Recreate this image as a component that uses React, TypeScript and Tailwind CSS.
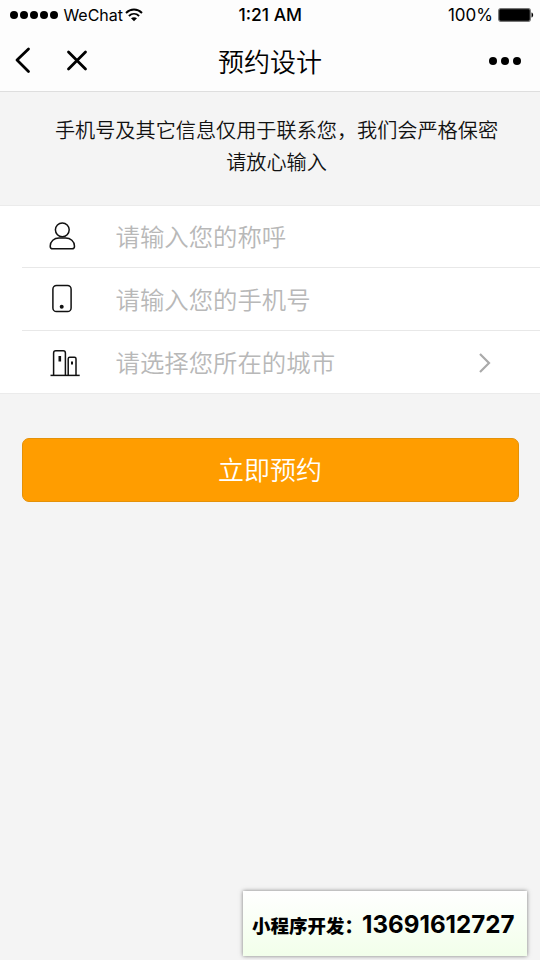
import type { ReactNode } from "react";

interface FieldRowProps {
  icon: ReactNode;
  placeholder: string;
  arrow?: boolean;
  last?: boolean;
}

const UserIcon = () => (
  <svg width="32" height="32" viewBox="0 0 32 32" fill="none" stroke="#111" strokeWidth="1.5">
    <circle cx="14.3" cy="8.8" r="6.9" />
    <path d="M11 17h6.600c4.800 0 8.900 3.300 8.900 8.200 0 1.700-1 2.600-2.600 2.600H4.800c-1.600 0-2.600-.9-2.600-2.600 0-4.900 4-8.200 8.800-8.200z" />
  </svg>
);

const PhoneIcon = () => (
  <svg width="32" height="32" viewBox="0 0 32 32" fill="none" stroke="#111" strokeWidth="1.5">
    <rect x="4.900" y="2.600" width="18.200" height="26" rx="3.600" />
    <circle cx="13.700" cy="23.700" r="2" fill="#111" stroke="none" />
  </svg>
);

const CityIcon = () => (
  <svg width="32" height="32" viewBox="0 0 32 32" fill="none" stroke="#111" strokeWidth="1.5">
    <path d="M2.500 29.400h29.200" />
    <path d="M5.600 29V7c0-1.400.8-2.200 2.200-2.200h7.400c1.400 0 2.200.8 2.200 2.200v22" />
    <path d="M20.200 29V12.800c0-1 .5-1.500 1.500-1.500h4.800c1 0 1.500.5 1.500 1.500V29" />
    <path d="M11.800 10v5.500" strokeWidth="2.600" />
    <path d="M24 15.500v3" strokeWidth="2" />
  </svg>
);

const StatusBar = () => (
  <div className="flex h-[30px] items-center justify-between pl-[9.500px] pr-[6px] text-[17px] leading-none">
    <div className="flex w-[200px] items-center">
      <div className="flex gap-[1.600px]">
        {[0, 1, 2, 3, 4].map((i) => (
          <span key={i} className="h-[8.500px] w-[8.500px] rounded-full bg-black" />
        ))}
      </div>
      <span className="ml-[5px] text-[16px]">WeChat</span>
      <svg className="ml-[2px]" width="18" height="14" viewBox="0 0 18 14" fill="none" stroke="#000" strokeWidth="1.900">
        <path d="M1 5C5.600.4 12.400.4 17 5" />
        <path d="M3.900 8c3-2.900 7.200-2.900 10.200 0" />
        <path d="M6 10.300c1.800-1.500 4.200-1.500 6 0L9 13.300z" fill="#000" stroke="none" />
      </svg>
    </div>
    <span className="-ml-[3px] text-[17.500px] font-[450]">1:21 AM</span>
    <div className="flex w-[200px] items-center justify-end">
      <span>100%</span>
      <svg className="ml-[5px]" width="36" height="14" viewBox="0 0 36 14">
        <rect x=".7" y=".7" width="31.600" height="12.600" rx="2" fill="#000" stroke="#777" strokeWidth="1.200" />
        <path d="M33.500 4.500c2.200.5 2.200 4.500 0 5z" fill="#000" />
      </svg>
    </div>
  </div>
);

const NavBar = () => (
  <div className="flex h-[61px] items-center justify-between pl-[14px] pr-[19px]">
    <div className="flex w-[120px] items-center">
      <svg width="18" height="28" viewBox="0 0 18 28" fill="none" stroke="#000" strokeWidth="2.800" strokeLinecap="round" strokeLinejoin="round">
        <path d="M14.500 2L3 13l11.500 11.500" />
      </svg>
      <svg className="ml-[34px]" width="22" height="22" viewBox="0 0 22 22" fill="none" stroke="#000" strokeWidth="2.800" strokeLinecap="round">
        <path d="M2.500 2l17 17M19.500 2l-17 17" />
      </svg>
    </div>
    <h1 className="pt-[5px] text-[26px] font-[350] leading-none">预约设计</h1>
    <div className="flex w-[115px] justify-end gap-[4px]">
      {[0, 1, 2].map((i) => (
        <span key={i} className="h-[8px] w-[8px] rounded-full bg-black" />
      ))}
    </div>
  </div>
);

const FieldRow = ({ icon, placeholder, arrow, last }: FieldRowProps) => (
  <div
    className={`ml-[22px] flex items-center pl-[26px] pr-[48px] ${last ? "h-[62px]" : "h-[63px] border-b border-[#e8e8e8] first:h-[62px]"}`}
  >
    {icon}
    <span className="ml-[35.500px] flex-1 pt-[2px] text-[24.400px] font-[350] text-[#b8b8b8]">{placeholder}</span>
    {arrow && (
      <svg className="mt-[2px]" width="14" height="22" viewBox="0 0 14 22" fill="none" stroke="#aaa" strokeWidth="2.200">
        <path d="M2 2l9 9-9 9" />
      </svg>
    )}
  </div>
);

const App = () => {
  return (
    <div className="flex h-[960px] w-[540px] flex-col overflow-hidden bg-[#f4f4f4] font-['Inter','Noto_Sans_CJK_SC',sans-serif] text-black">
      <header className="h-[92px] border-b border-[#dedede] bg-[#fdfdfd]">
        <StatusBar />
        <NavBar />
      </header>

      <p className="mt-[23px] pl-[13px] text-center text-[20.150px] font-[350] leading-[31.500px] text-[#111]">
        手机号及其它信息仅用于联系您，我们会严格保密
        <br />
        请放心输入
      </p>

      <section className="mt-[27px] border-y border-[#ebebeb] bg-white">
        <FieldRow icon={<UserIcon />} placeholder="请输入您的称呼" />
        <FieldRow icon={<PhoneIcon />} placeholder="请输入您的手机号" />
        <FieldRow icon={<CityIcon />} placeholder="请选择您所在的城市" arrow last />
      </section>

      <button className="mx-[21.500px] mt-[44px] h-[63.500px] rounded-[7px] border border-[#e49108] bg-[#ff9d00] pt-[2px] text-[26px] font-[350] text-white">
        立即预约
      </button>

      {/* contact */}
      <footer className="mb-[4px] ml-auto mr-[13px] mt-auto flex h-[65px] w-[284px] items-center bg-linear-to-b from-white to-[#f2ffea] pl-[9px] pt-[3px] font-bold shadow-[0_0_4px_rgba(0,0,0,0.5)]">
        <span className="w-[110px] whitespace-nowrap pt-[3px] text-[18.500px] font-black">小程序开发：</span>
        <span className="whitespace-nowrap pt-px text-[24.200px]">13691612727</span>
      </footer>
    </div>
  );
};

export default App;
